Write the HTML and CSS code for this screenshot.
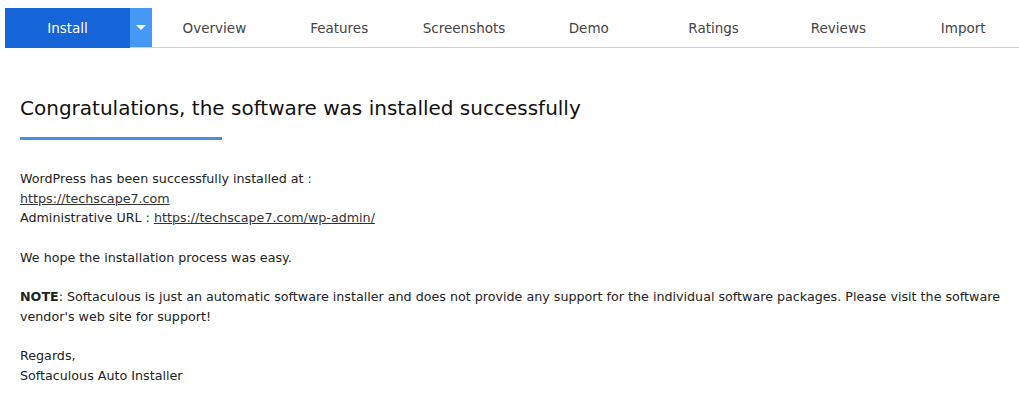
FILE: index.html
```html
<!DOCTYPE html>
<html lang="en">
<head>
    <meta charset="UTF-8">
    <title>Softaculous - Install</title>
    <link rel="stylesheet" href="styles.css">
</head>
<body>

    <!-- Tabs -->
    <nav class="tabs">
        <div class="install-group">
            <a class="install-btn" href="#">Install</a>
            <a class="install-drop" href="#"><span class="caret"></span></a>
        </div>
        <a class="tab" href="#">Overview</a>
        <a class="tab" href="#">Features</a>
        <a class="tab" href="#">Screenshots</a>
        <a class="tab" href="#">Demo</a>
        <a class="tab" href="#">Ratings</a>
        <a class="tab" href="#">Reviews</a>
        <a class="tab" href="#">Import</a>
    </nav>

    <!-- Success message -->
    <section class="done">
        <h2 class="done-title">Congratulations, the software was installed successfully</h2>
        <div class="done-rule"></div>

        <p>
            WordPress has been successfully installed at :<br>
            <a href="#">https://techscape7.com</a><br>
            Administrative URL : <a href="#">https://techscape7.com/wp-admin/</a>
        </p>

        <p>We hope the installation process was easy.</p>

        <p><b>NOTE</b>: Softaculous is just an automatic software installer and does not provide any support for the individual software packages. Please visit the software vendor's web site for support!</p>

        <p>
            Regards,<br>
            Softaculous Auto Installer
        </p>
    </section>

</body>
</html>
```

FILE: styles.css
```css
* {
    margin: 0;
    padding: 0;
    box-sizing: border-box;
}

body {
    font-family: "DejaVu Sans", sans-serif;
    color: #222;
    background: #fff;
    overflow: hidden;
}

/* Tabs */
.tabs {
    display: flex;
    margin: 8px 0 0 5px;
    height: 40px;
    border-bottom: 1px solid #cfcfcf;
    width: 1021px;
}

.install-group {
    display: flex;
    margin-bottom: -1px;
}

.install-btn {
    width: 125px;
    background: #1565d8;
    color: #fff;
    display: flex;
    justify-content: center;
    align-items: center;
    font-size: 13.5px;
    text-decoration: none;
}

.install-drop {
    width: 22px;
    height: 39px;
    background: #4599f4;
    display: flex;
    justify-content: center;
    align-items: center;
}

.caret {
    border-left: 5px solid transparent;
    border-right: 5px solid transparent;
    border-top: 5px solid #fff;
}

.tab {
    width: 124.8px;
    display: flex;
    justify-content: center;
    align-items: center;
    font-size: 13.5px;
    color: #444;
    text-decoration: none;
}

/* Success message */
.done {
    padding: 47px 6px 0 20px;
}

.done-title {
    font-size: 20px;
    font-weight: 400;
    color: #111;
    line-height: 26px;
}

.done-rule {
    width: 202px;
    height: 3px;
    background: #4a90e2;
    margin: 16px 0 29px 0;
}

.done p {
    font-size: 12.7px;
    line-height: 19.5px;
    color: #222;
    margin-bottom: 20px;
}

.done a {
    color: #333;
}
```
